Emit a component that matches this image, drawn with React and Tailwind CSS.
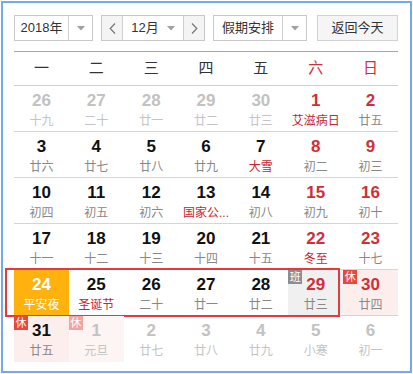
import React from "react";

// date cells, one array per week
const weeks = [
  [
    { d: 26, l: "十九", o: true },
    { d: 27, l: "二十", o: true },
    { d: 28, l: "廿一", o: true },
    { d: 29, l: "廿二", o: true },
    { d: 30, l: "廿三", o: true },
    { d: 1, l: "艾滋病日", red: true, lred: true },
    { d: 2, l: "廿五", red: true },
  ],
  [
    { d: 3, l: "廿六" },
    { d: 4, l: "廿七" },
    { d: 5, l: "廿八" },
    { d: 6, l: "廿九" },
    { d: 7, l: "大雪", lred: true },
    { d: 8, l: "初二", red: true },
    { d: 9, l: "初三", red: true },
  ],
  [
    { d: 10, l: "初四" },
    { d: 11, l: "初五" },
    { d: 12, l: "初六" },
    { d: 13, l: "国家公...", lred: true },
    { d: 14, l: "初八" },
    { d: 15, l: "初九", red: true },
    { d: 16, l: "初十", red: true },
  ],
  [
    { d: 17, l: "十一" },
    { d: 18, l: "十二" },
    { d: 19, l: "十三" },
    { d: 20, l: "十四" },
    { d: 21, l: "十五" },
    { d: 22, l: "冬至", red: true, lred: true },
    { d: 23, l: "十七", red: true },
  ],
  [
    { d: 24, l: "平安夜", today: true },
    { d: 25, l: "圣诞节", lred: true },
    { d: 26, l: "二十" },
    { d: 27, l: "廿一" },
    { d: 28, l: "廿二" },
    { d: 29, l: "廿三", red: true, badge: "班", bg: "grey" },
    { d: 30, l: "廿四", red: true, badge: "休", bg: "pink" },
  ],
  [
    { d: 31, l: "廿五", badge: "休", bg: "pink" },
    { d: 1, l: "元旦", o: true, badge: "休", bg: "pinkfade" },
    { d: 2, l: "廿七", o: true },
    { d: 3, l: "廿八", o: true },
    { d: 4, l: "廿九", o: true },
    { d: 5, l: "小寒", o: true },
    { d: 6, l: "初一", o: true },
  ],
];

const Caret = () => (
  <svg width="8" height="5" viewBox="0 0 8 5">
    <path d="M0 0 L8 0 L4 4.5 Z" fill="#a0a0a0" />
  </svg>
);

const Cell = ({ c }) => {
  let bg = "";
  if (c.today) bg = "bg-[#ffb20e]";
  else if (c.bg === "grey") bg = "bg-[#f0f0f0]";
  else if (c.bg === "pink") bg = "bg-[#fdeeee]";
  else if (c.bg === "pinkfade") bg = "bg-[#fdf4f4]";

  let num = "text-[#111]";
  if (c.today) num = "text-white";
  else if (c.o) num = "text-[#c2c2c2]";
  else if (c.red) num = "text-[#cf2f38]";

  let lunar = "text-[#888]";
  if (c.today) lunar = "text-white";
  else if (c.o) lunar = "text-[#c4c4c4]";
  else if (c.lred) lunar = "text-[#c8262f]";

  return (
    <div className={`relative flex flex-col items-center pt-[5px] ${bg}`}>
      {c.badge && (
        <span
          className={`absolute left-0 top-0 w-[14px] h-[14px] text-[11px] leading-[14px] text-center text-white ${
            c.badge === "班" ? "bg-[#8e8e8e]" : c.bg === "pinkfade" ? "bg-[#f2a4a0]" : "bg-[#e8473d]"
          }`}
        >
          {c.badge}
        </span>
      )}
      <span className={`text-[17px] leading-[20px] font-bold ${num}`}>{c.d}</span>
      <span className={`text-[12px] leading-[16px] mt-[2px] whitespace-nowrap ${lunar}`}>{c.l}</span>
    </div>
  );
};

export default function App() {
  return (
    <div className="w-[413px] h-[374px] bg-white p-px font-['Liberation_Sans','Noto_Sans_CJK_SC',sans-serif]">
      <div className="w-[411px] h-[372px] border-2 border-[#72aaee] pt-[12px] pl-[11px]">
        {/* toolbar */}
        <div className="flex items-center h-[26px] text-[13px] text-[#333]">
          <div className="flex h-[26px] w-[79px] border border-[#c8c8c8]">
            <div className="w-[54px] flex items-center justify-center border-r border-[#d0d0d0]">2018年</div>
            <div className="flex-1 flex items-center justify-center">
              <Caret />
            </div>
          </div>

          <div className="flex h-[26px] w-[104px] ml-[8px] border border-[#c8c8c8]">
            <div className="w-[21px] flex items-center justify-center bg-[#f4f4f4] border-r border-[#d0d0d0] text-[#666]">
              <svg width="7" height="11" viewBox="0 0 7 11">
                <path d="M6 0.5 L1.2 5.5 L6 10.5" fill="none" stroke="#777" strokeWidth="1.2" />
              </svg>
            </div>
            <div className="flex-1 flex items-center justify-center gap-[8px]">
              <span>12月</span>
              <Caret />
            </div>
            <div className="w-[21px] flex items-center justify-center bg-[#f4f4f4] border-l border-[#d0d0d0]">
              <svg width="7" height="11" viewBox="0 0 7 11">
                <path d="M1 0.5 L5.8 5.5 L1 10.5" fill="none" stroke="#777" strokeWidth="1.2" />
              </svg>
            </div>
          </div>

          <div className="flex h-[26px] w-[94px] ml-[8px] border border-[#c8c8c8]">
            <div className="w-[69px] flex items-center justify-center border-r border-[#d0d0d0]">假期安排</div>
            <div className="flex-1 flex items-center justify-center">
              <Caret />
            </div>
          </div>

          <div className="flex h-[26px] w-[81px] ml-[10px] items-center justify-center border border-[#d2d2d2] bg-[#f5f5f5]">
            返回今天
          </div>
        </div>

        {/* calendar */}
        <div className="w-[384px] mt-[10px] border-t border-[#7eaee6]">
          <div className="grid grid-cols-7 h-[34px] items-center border-b border-[#cfcfcf] text-[15px] text-[#333]">
            {["一", "二", "三", "四", "五", "六", "日"].map((w, i) => (
              <div key={w} className={`text-center ${i > 4 ? "text-[#cf2f38]" : ""}`}>
                {w}
              </div>
            ))}
          </div>

          {weeks.map((week, r) => (
            <div
              key={r}
              className={`relative grid grid-cols-7 h-[46px] ${r < 5 ? "border-b border-[#d5d5d5]" : ""}`}
            >
              {week.map((c, i) => (
                <Cell key={i} c={c} />
              ))}
              {r === 4 && (
                <div className="absolute left-[-9px] top-[-2px] w-[335px] h-[49px] border-2 border-[#e23b3f] pointer-events-none" />
              )}
            </div>
          ))}
        </div>
      </div>
    </div>
  );
}
